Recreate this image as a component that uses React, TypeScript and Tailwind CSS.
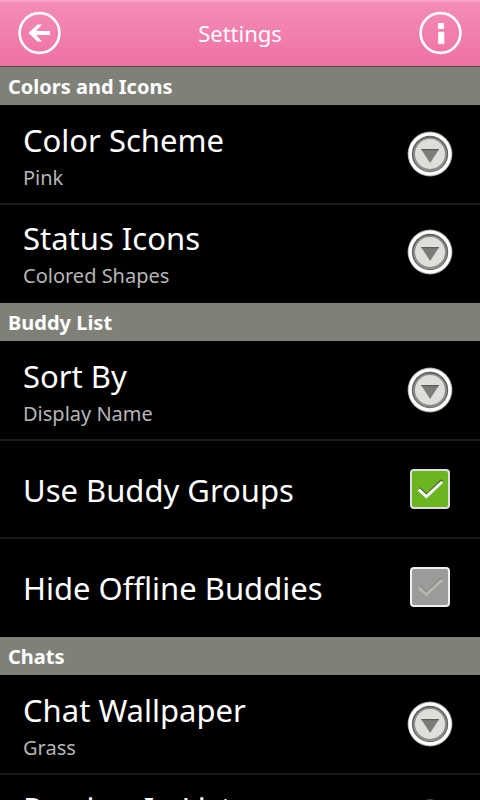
import { useState } from "react";

function BackIcon() {
  return (
    <svg viewBox="0 0 44 44" className="size-11" fill="none" aria-hidden="true">
      <circle cx="22.5" cy="22" r="19.9" stroke="#fff" strokeWidth="2.6" />
      <path d="M11.4 22 20.6 13.6H25L19.2 20H33V24H19.2L25 30.4H20.6Z" fill="#fff" />
    </svg>
  );
}

function InfoIcon() {
  return (
    <svg viewBox="0 0 44 44" className="size-11" fill="none" aria-hidden="true">
      <circle cx="21.5" cy="22" r="19.9" stroke="#fff" strokeWidth="2.6" />
      <rect x="19" y="12" width="6" height="6" rx="0.8" fill="#fff" />
      <path d="M19.8 21H25V32.8H19.5V21.6Z" fill="#fff" stroke="#fff" strokeWidth="0.6" />
    </svg>
  );
}

function DropIcon() {
  return (
    <svg viewBox="0 0 46 46" className="size-[46px] shrink-0" aria-hidden="true">
      <circle cx="23" cy="23" r="22.4" fill="#a5a6a5" />
      <circle cx="23" cy="23" r="21.5" fill="#fff" />
      <circle cx="23" cy="23" r="18.2" fill="#5f615f" />
      <circle cx="23" cy="23.5" r="17" fill="#8b8d87" />
      <circle cx="23" cy="23" r="15" fill="#dededb" />
      <path d="M14 18H32.2L23.1 32Z" fill="#7b7e76" />
      <path d="M14 18H32.2L31.4 19.3H14.8Z" fill="#5c5e5a" />
    </svg>
  );
}

function SectionTitle({ children }: { children: string }) {
  return (
    <h2 className="h-[38px] bg-[#7f8179] px-2 pt-0.5 text-xl leading-9 font-bold text-white">
      {children}
    </h2>
  );
}

const rowStyle =
  "flex h-[98px] items-center justify-between border-t-2 border-[#181c1f] pr-[27px] pl-[23px] first:border-transparent";

function SelectRow({ id, label, options }: { id: string; label: string; options: string[] }) {
  return (
    <div className={`${rowStyle} pb-0.5`}>
      <div className="min-w-0 flex-1 pt-1">
        <label htmlFor={id} className="block text-[31px] leading-11 text-white">
          {label}
        </label>
        <select
          id={id}
          className="block h-8 w-full appearance-none bg-transparent p-0 text-xl leading-8 text-[#b5b6b5] outline-none"
        >
          {options.map((o) => (
            <option key={o}>{o}</option>
          ))}
        </select>
      </div>
      <DropIcon />
    </div>
  );
}

function CheckRow({ id, label, initial }: { id: string; label: string; initial: boolean }) {
  const [on, setOn] = useState(initial);
  return (
    <div className={rowStyle}>
      <label htmlFor={id} className="flex-1 pt-0.5 text-[31px] leading-11 text-white">
        {label}
      </label>
      <span className="mr-[3px] grid size-10 shrink-0">
        <input
          id={id}
          type="checkbox"
          checked={on}
          onChange={(e) => setOn(e.target.checked)}
          className="col-start-1 row-start-1 size-10 appearance-none rounded-[4px] border-2 border-[#f0f0f0] bg-[#9a9c99] checked:border-[#dedede] checked:bg-[#6bb521]"
        />
        <svg
          viewBox="0 0 40 40"
          className="pointer-events-none col-start-1 row-start-1 size-10"
          fill="none"
          aria-hidden="true"
        >
          <path d="M9 19.2 16.6 26.6 32 11.2" stroke={on ? "#3f5a30" : "#858783"} strokeWidth="3" />
          <path d="M8.6 20.4 16.4 27.6 32.2 12.8" stroke={on ? "#fff" : "#b5b8b2"} strokeWidth="2.8" />
        </svg>
      </span>
    </div>
  );
}

export default function App() {
  return (
    <div className="flex h-screen flex-col bg-black font-['Noto_Sans',sans-serif]">
      <header className="flex h-[67px] shrink-0 items-center justify-between border-t-2 border-b border-t-[#f7a2c4] border-b-[#4a4a4a] bg-linear-to-b from-[#f48cb8] to-[#ef71a4] px-[17px] pb-0.5">
        <button type="button" aria-label="Back">
          <BackIcon />
        </button>
        <h1 className="text-[22px] leading-8 text-white">Settings</h1>
        <button type="button" aria-label="Info">
          <InfoIcon />
        </button>
      </header>
      <main className="min-h-0 flex-1 overflow-y-auto [scrollbar-width:none]">
        <section>
          <SectionTitle>Colors and Icons</SectionTitle>
          <div className="pb-0.5">
            <SelectRow id="scheme" label="Color Scheme" options={["Pink"]} />
            <SelectRow id="status" label="Status Icons" options={["Colored Shapes"]} />
          </div>
        </section>
        <section>
          <SectionTitle>Buddy List</SectionTitle>
          <div className="pb-0.5">
            <SelectRow id="sort" label="Sort By" options={["Display Name"]} />
            <CheckRow id="groups" label="Use Buddy Groups" initial={true} />
            <CheckRow id="offline" label="Hide Offline Buddies" initial={false} />
          </div>
        </section>
        <section>
          <SectionTitle>Chats</SectionTitle>
          <div className="pb-0.5">
            <SelectRow id="wallpaper" label="Chat Wallpaper" options={["Grass"]} />
            <SelectRow id="preview" label="Preview In List" options={["On"]} />
          </div>
        </section>
      </main>
    </div>
  );
}
